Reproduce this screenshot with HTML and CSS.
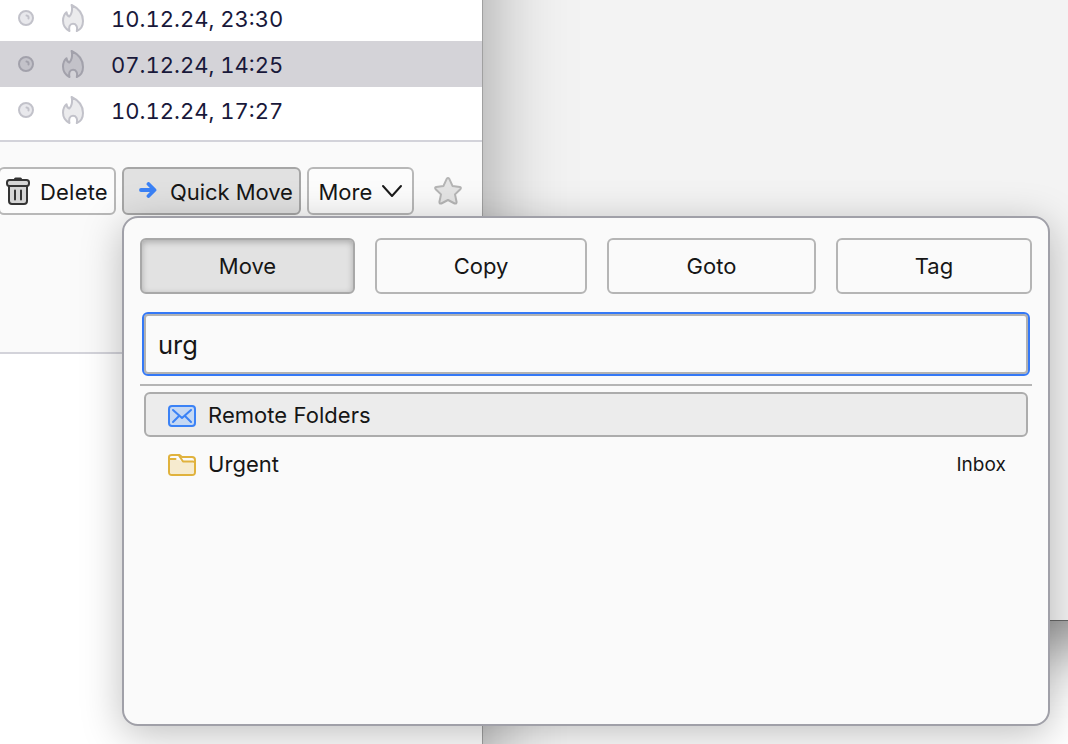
FILE: index.html
```html
<!DOCTYPE html>
<html lang="en">
<head>
<meta charset="utf-8">
<title>Quick Move</title>
<link rel="stylesheet" href="styles.css">
</head>
<body>
<svg class="defs" aria-hidden="true">
  <symbol id="dot" viewBox="0 0 16 16"><circle cx="8" cy="8" r="7" /><path d="M8.500 5.500q2.500 .2 2 3" fill="none"/></symbol>
  <symbol id="flame" viewBox="0 0 22 28"><path d="M9.600 1C16 4 21 9.500 21 17C21 22 18.500 25.500 14.800 27C15.800 22.500 14 19.700 11 19.700C8 19.700 6.500 22.500 7.500 27C3.500 25 1 21.500 1 16.500C1 12.500 2.500 10 4.500 8.200C4.700 10.500 5.500 12 7.200 12.600C9.500 10.800 10.800 6 9.600 1Z"/></symbol>
</svg>
<div class="desktop">
  <div class="back-window"></div>
  <main class="window">
    <div class="messages">
      <div class="message"><svg class="dot"><use href="#dot"/></svg><svg class="flame"><use href="#flame"/></svg><span class="date">10.12.24, 23:30</span></div>
      <div class="message selected"><svg class="dot"><use href="#dot"/></svg><svg class="flame"><use href="#flame"/></svg><span class="date">07.12.24, 14:25</span></div>
      <div class="message"><svg class="dot"><use href="#dot"/></svg><svg class="flame"><use href="#flame"/></svg><span class="date">10.12.24, 17:27</span></div>
    </div>
    <header class="header">
      <div class="toolbar">
        <button class="tool delete">
          <svg class="trash" viewBox="0 0 24 28"><path class="fill" d="M3 9h18v15q0 3-3 3H6q-3 0-3-3z"/><path d="M9 13.500v9M15 13.500v9"/><path class="knob" d="M9.500 2h5"/><rect class="fill" x="1" y="3" width="22" height="6" rx="2.500"/></svg>
          <span>Delete</span>
        </button>
        <button class="tool quick">
          <svg class="arrow" viewBox="0 0 18 16"><path d="M2 8h13M9.500 2l6 6-6 6"/></svg>
          <span>Quick Move</span>
        </button>
        <button class="tool more"><span>More</span><svg class="chevron" viewBox="0 0 22 14"><path d="M2 2l9 10 9-10"/></svg></button>
        <svg class="star" viewBox="0 0 28 28"><path d="M12.700 1.900Q14 .3 15.300 1.900L18.500 8.900L25.800 10Q27.600 10.500 26.300 12.200L21 17.400L22.600 25Q22.600 27 20.700 26.500L14 23L7.300 26.500Q5.400 27 5.400 25L7 17.400L1.700 12.200Q.4 10.500 2.200 10L9.500 8.900Z"/></svg>
      </div>
    </header>
    <section class="body"></section>
  </main>
  <aside class="popup">
    <nav class="modes">
      <button class="mode active">Move</button>
      <button class="mode">Copy</button>
      <button class="mode">Goto</button>
      <button class="mode">Tag</button>
    </nav>
    <div class="search">urg</div>
    <div class="results">
      <div class="result current">
        <svg class="icon mail" viewBox="0 0 28 22"><rect x="1" y="1" width="26" height="20" rx="3"/><path d="M5 5l9 8 9-8M5 17l5.500-5.500M23 17l-5.500-5.500"/></svg>
        <span>Remote Folders</span>
      </div>
      <div class="result">
        <svg class="icon folder" viewBox="0 0 28 22"><path class="back" d="M4 1h7.500L14 3h10q3 0 3 3v12q0 3-3 3H4q-3 0-3-3V3q0-2 3-2z"/><path class="front" d="M2 6h9l4 2h9q2 0 2 2v8q0 2-2 2H4q-2 0-2-2z"/><path class="line" d="M1 5h6.500M11 1.500l4 6h10q1.500 0 2 1"/></svg>
        <span>Urgent</span><span class="parent">Inbox</span>
      </div>
    </div>
  </aside>
</div>
</body>
</html>
```
FILE: styles.css
```css
* { box-sizing: border-box; }
body { margin: 0; font: 22px/28px Inter, "Liberation Sans", sans-serif; color: #161616; }
button { font: inherit; color: inherit; margin: 0; }
svg { display: block; flex: none; fill: none; stroke-width: 2; stroke-linecap: round; stroke-linejoin: round; }
.defs { position: absolute; width: 0; height: 0; }
.desktop { position: relative; width: 1068px; height: 744px; overflow: hidden; background: #fff; }
.back-window { position: absolute; left: 0; top: -40px; width: 1200px; height: 661px; background: #f3f3f3; border-bottom: 1px solid #666; box-shadow: 0 24px 60px rgba(0,0,0,.45); }
.window { position: relative; isolation: isolate; display: flex; flex-direction: column; width: 483px; height: 744px; background: #fff; border-right: 1px solid #a0a0a0; }
/* The window's shadow runs past the top and bottom screen edges. */
.window::before { content: ""; position: absolute; z-index: -1; inset: -120px -1px -120px 0; box-shadow: 0 0 80px rgba(0,0,0,.38); }
.messages { height: 142px; border-bottom: 2px solid #d3d3da; }
.message { display: flex; align-items: center; height: 46px; padding-left: 18px; color: #18183a; }
.message:first-child { height: 41px; padding-bottom: 5px; }
.message.selected { background: #d4d3d8; }
.dot { width: 16px; height: 16px; margin-right: 28px; fill: #e8e8ec; stroke: #c2c2ca; }
.flame { width: 22px; height: 28px; margin-right: 27px; fill: #ebebed; stroke: #c2c2ca; }
.selected svg { fill: #c3c2c9; stroke: #a2a1ab; }
.date { width: 172px; text-align: right; font-variant-numeric: tabular-nums; white-space: nowrap; margin-top: 2px; }
.header { height: 212px; padding-top: 25px; background: #fafafa; border-bottom: 2px solid #d3d3da; }
.toolbar { display: flex; align-items: center; height: 48px; gap: 6px; }
.tool { display: flex; align-items: center; height: 48px; padding: 2px 0 0; border: 2px solid #b8b8b8; border-radius: 6px; background: #fcfcfc; white-space: nowrap; }
.delete { width: 118px; margin-left: -2px; padding-left: 6px; gap: 10px; letter-spacing: .2px; }
.quick { width: 179px; padding-left: 15px; gap: 13px; background: #e1e1e1; border-color: #a6a6a6; }
.quick span { letter-spacing: -.05px; }
.more { width: 107px; padding-left: 9.5px; gap: 8.5px; }
.trash { width: 24px; height: 28px; margin-top: -3px; stroke: #343434; }
.knob { stroke-width: 3; }
.fill { fill: #d5d5d5; }
.arrow { width: 18px; height: 16px; margin-top: -4px; stroke: #3b82f6; stroke-width: 3.8; }
.chevron { width: 22px; height: 14px; margin-top: -3px; stroke: #1a1a1a; }
.star { width: 28px; height: 28px; margin-left: 14px; fill: #e4e4e4; stroke: #b5b5b5; }
.popup { position: absolute; left: 122px; top: 216px; width: 928px; height: 510px; padding: 20px 16px; background: #fafafa; border: 2px solid #a0a0a8; border-radius: 16px; box-shadow: 0 8px 40px rgba(0,0,0,.26); }
.modes { display: grid; grid-template-columns: 215px 212px 209px 196px; gap: 20px; }
.mode { height: 56px; padding: 0; border: 2px solid #b5b5b5; border-radius: 6px; background: #fafafa; }
.mode.active { background: #e2e2e2; border-color: #a8a8a8; box-shadow: inset 0 2px 6px rgba(0,0,0,.25); }
.search { height: 60px; margin: 20px 4px 0; padding: 0 12px; border: 2px solid #b2b2b2; border-radius: 4px; outline: 2px solid #3478f6; font-size: 25.5px; line-height: 58px; }
.results { margin-top: 10px; padding: 6px 4px; border-top: 2px solid #b5b5b5; }
.result { display: flex; align-items: center; height: 45px; margin-bottom: 4px; padding: 1px 20px 0 22px; border: 2px solid transparent; border-radius: 6px; gap: 12px; letter-spacing: .05px; }
.result.current { background: #ececec; border-color: #acacac; }
.icon { width: 28px; height: 22px; margin-top: 1px; }
.mail { fill: #c5d8f3; stroke: #3b82f6; }
.mail path { fill: none; }
.folder { stroke: #e0b23d; }
.folder .back { fill: #fafafa; }
.folder .front { fill: #f6ebcf; stroke: none; }
.parent { margin-left: auto; padding-top: 2px; font-size: 19px; }
```
